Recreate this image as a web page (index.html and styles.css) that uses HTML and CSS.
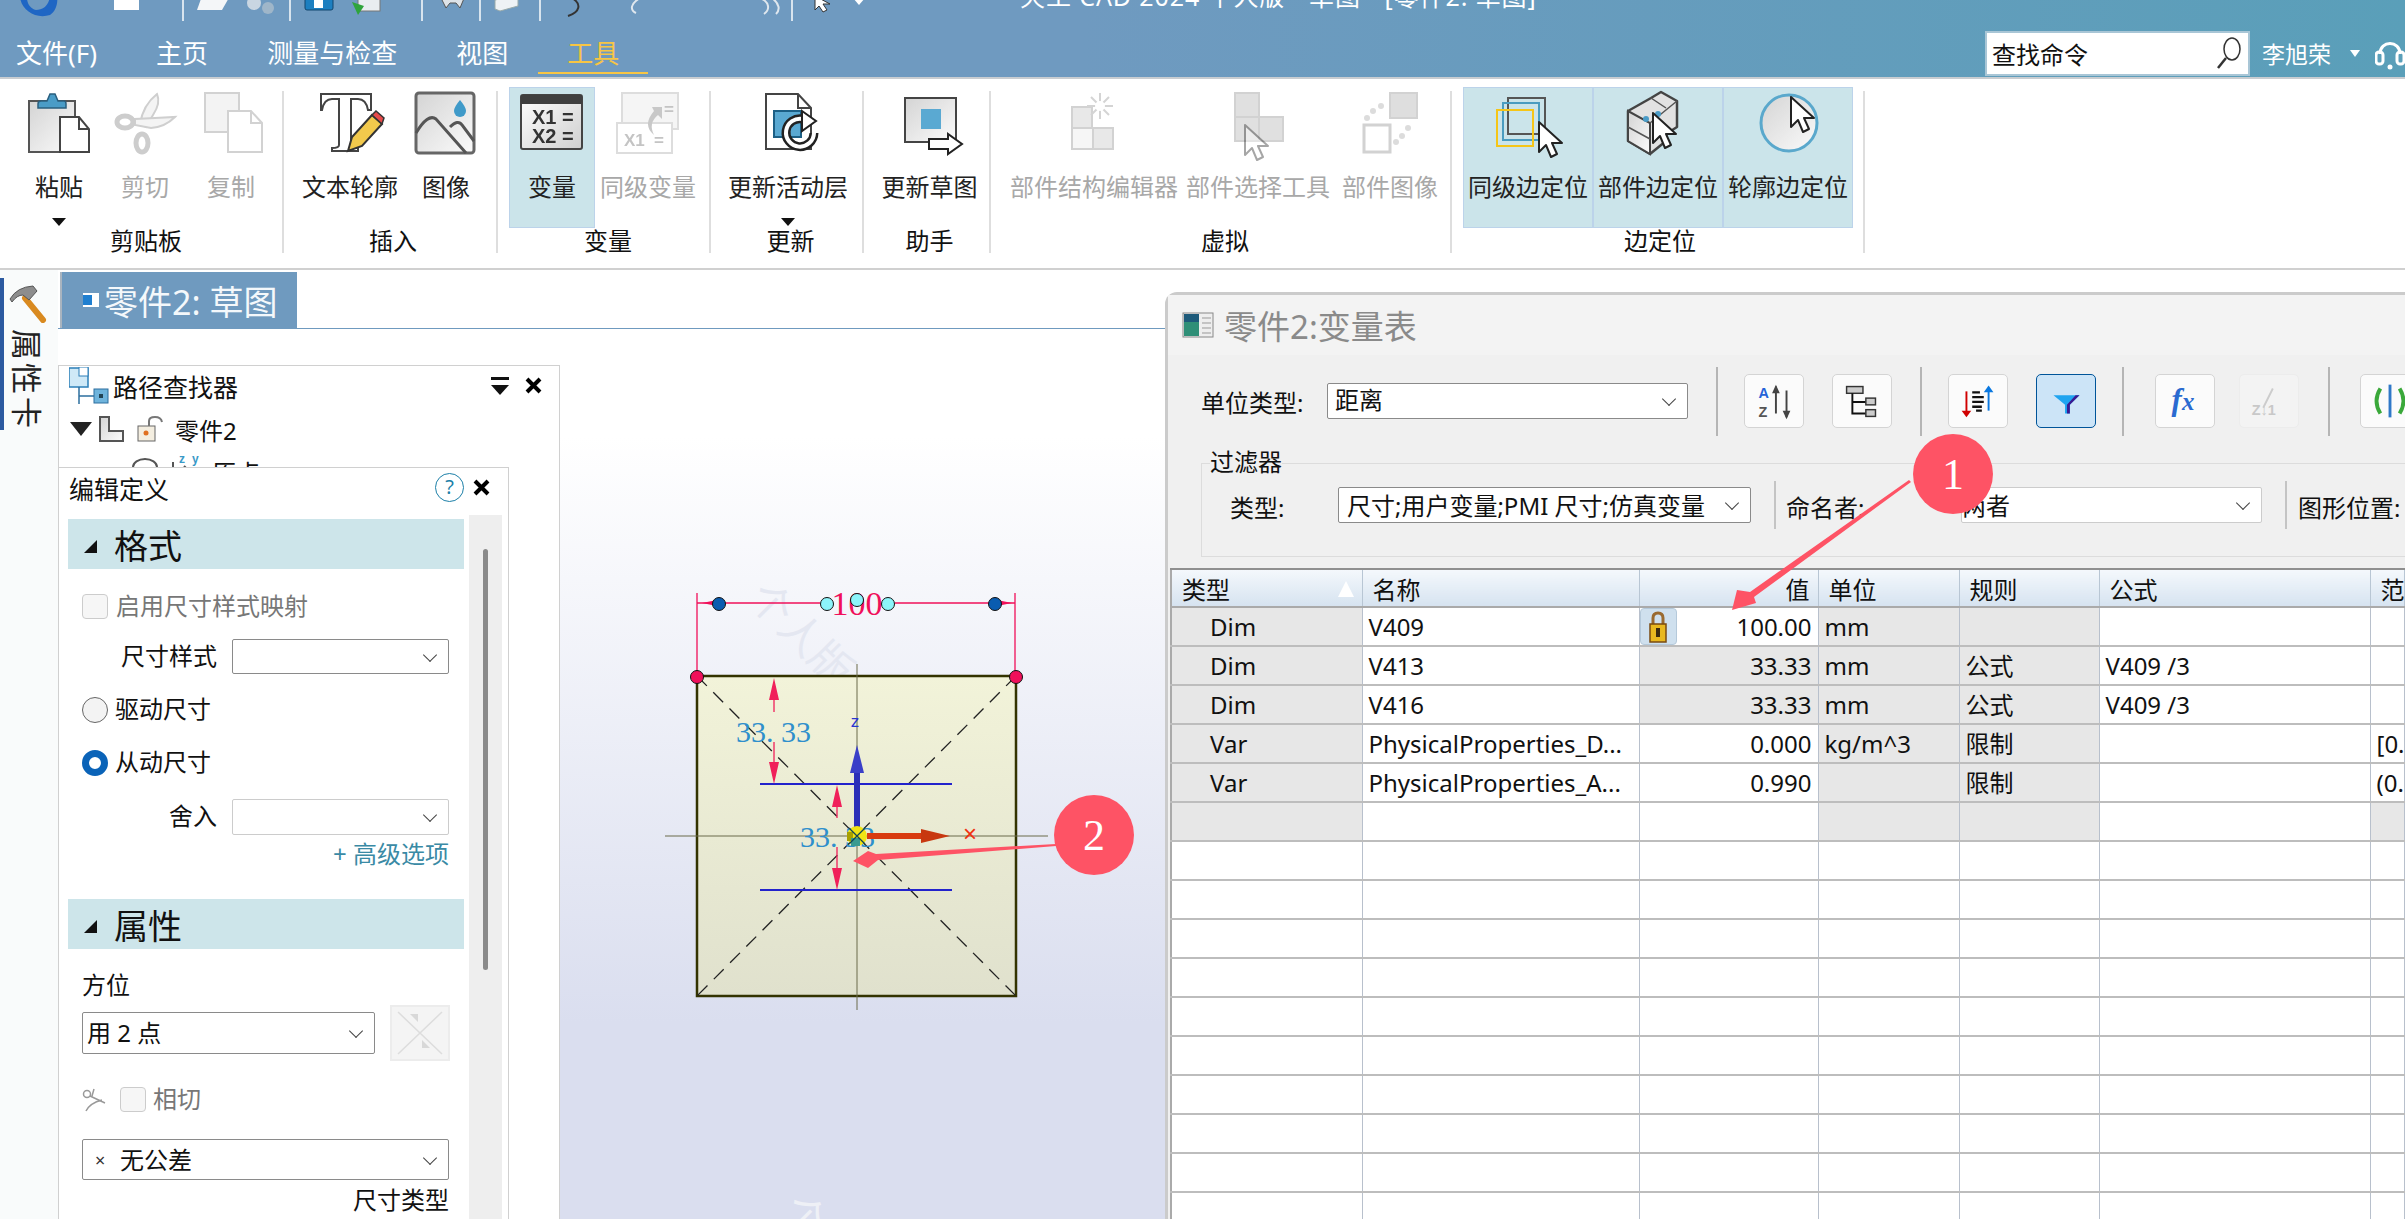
FILE: index.html
```html
<!DOCTYPE html>
<html lang="zh-CN">
<head>
<meta charset="utf-8">
<title>天工 CAD 2024</title>
<link rel="stylesheet" href="styles.css">
</head>
<body>
<svg class="defs" aria-hidden="true"><defs>
  <linearGradient id="g" x1="0" y1="0" x2="1" y2="1"><stop offset="0" stop-color="#d4d4d4"/><stop offset="1" stop-color="#fbfbfb"/></linearGradient>
  <linearGradient id="gd" x1="0" y1="0" x2="1" y2="1"><stop offset="0" stop-color="#fff"/><stop offset="1" stop-color="#cfcfcf"/></linearGradient>
  <linearGradient id="sq" x1="0" y1="0" x2="0" y2="1"><stop offset="0" stop-color="#f2f3d9"/><stop offset="1" stop-color="#e0e1cd"/></linearGradient>
  <path id="cursor" d="M0 0V30L7 23 12 35 18 32 13 21H23Z" fill="#fff" stroke="#222" stroke-width="2" stroke-linejoin="round"/>
</defs></svg>

<div class="app">
  <header class="titlebar">
    <div class="qat">
      <svg class="qat-icons" width="1000" height="21" viewBox="0 0 1000 21">
        <path d="M20-8C18 8 34 20 50 15 57 10 58 2 57-6L50-6C50 4 44 10 36 10 28 8 26 0 27-8Z" fill="#1f66c4"/>
        <rect x="114" y="-6" width="25" height="16" fill="#fff"/>
        <path d="M183 0V21M290 0V21M422 0V21M480 0V21M540 0V21M792 0V21" stroke="#d8e4ee" stroke-width="2"/>
        <path d="M202-4H230L222 10H197Z" fill="#f4f6f8"/>
        <circle cx="254" cy="3" r="7" fill="#c9d6e2"/><circle cx="268" cy="8" r="6" fill="#9fb6c9"/>
        <rect x="305" y="-6" width="28" height="16" rx="2" fill="#1c7fc0" stroke="#12466e"/><rect x="314" y="0" width="9" height="8" fill="#fff"/>
        <rect x="358" y="-6" width="22" height="17" fill="#e9edf0" stroke="#777"/><path d="M352 2L364 6 358 15Z" fill="#2fa43c"/>
        <path d="M440-4H465L460 8 456 3H450L446 8Z" fill="#dde3e8" stroke="#555"/>
        <path d="M495 0L512-4H518V6L500 11 495 9Z" fill="#eef2f5" stroke="#9aa"/>
        <path d="M572-2C582 4 580 12 568 16" fill="none" stroke="#333" stroke-width="2"/>
        <path d="M640-2C630 4 630 10 636 13" fill="none" stroke="#dfe7ee" stroke-width="2"/>
        <path d="M760-2C770 2 770 10 764 14M772-2C780 4 780 10 776 14" fill="none" stroke="#dfe7ee" stroke-width="2"/>
        <path d="M815-4V10L819 6 823 12 827 10 823 4H830Z" fill="#fff" stroke="#333"/>
        <path d="M853-2H865L859 5Z" fill="#fff"/>
      </svg>
      <span class="app-title">天工 CAD 2024 个人版 - 草图 - [零件2: 草图]</span>
    </div>
    <div class="menubar">
      <nav class="tabs">
        <span>文件(F)</span><span>主页</span><span>测量与检查</span><span>视图</span><span class="tab-active">工具</span>
      </nav>
      <div class="search">
        <span>查找命令</span>
        <svg width="28" height="34" viewBox="0 0 28 34"><ellipse cx="17" cy="13" rx="8" ry="11" fill="none" stroke="#333" stroke-width="1.5"/><path d="M11 22L3 32" stroke="#333" stroke-width="2.5"/></svg>
      </div>
      <span class="user">李旭荣</span>
      <span class="user-caret"></span>
      <svg class="headset" width="30" height="34" viewBox="0 0 30 34"><path d="M5 18C5 4 25 4 25 18" fill="none" stroke="#fff" stroke-width="3"/><rect x="1" y="16" width="7" height="12" rx="3" fill="none" stroke="#fff" stroke-width="3"/><rect x="22" y="16" width="7" height="12" rx="3" fill="none" stroke="#fff" stroke-width="3"/><circle cx="15" cy="31" r="2.5" fill="#fff"/></svg>
    </div>
  </header>

  <section class="ribbon">
    <div class="rgroup rg-clip">
      <div class="rbtns">
        <div class="rbtn rb-86"><svg class="ric" viewBox="0 0 64 64"><rect x="2" y="10" width="46" height="51" fill="url(#g)" stroke="#555" stroke-width="2"/><path d="M11 17V13Q11 10 14 10H20L23 3H28L31 10H37Q39 10 39 13V17Z" fill="#4a9cc7" stroke="#2a5f7f" stroke-width="1.5"/><path d="M33 26H52L62 38V61H33Z" fill="#fff" stroke="#444" stroke-width="2"/><path d="M52 26V38H62" fill="none" stroke="#444" stroke-width="2"/></svg><span class="rlabel">粘贴</span><i class="caret"></i></div>
        <div class="rbtn rb-86 off"><svg class="ric" viewBox="0 0 64 64"><g fill="#f4f4f4" stroke="#cfcfcf" stroke-width="2"><path d="M44 3Q48 12 40 24L33 36 27 33Q30 14 44 3Z"/><path d="M62 26Q52 36 38 37L22 34V28L42 27Z"/></g><g fill="none" stroke="#cdcdcd" stroke-width="5"><ellipse cx="12" cy="31" rx="8" ry="6"/><ellipse cx="29" cy="52" rx="6" ry="9"/></g></svg><span class="rlabel">剪切</span></div>
        <div class="rbtn rb-86 off"><svg class="ric" viewBox="0 0 64 64"><rect x="6" y="2" width="34" height="39" fill="#f3f3f3" stroke="#d2d2d2" stroke-width="2"/><path d="M29 20H52L63 32V61H29Z" fill="#fff" stroke="#d2d2d2" stroke-width="2"/><path d="M52 20V32H63" fill="none" stroke="#d2d2d2" stroke-width="2"/></svg><span class="rlabel">复制</span></div>
      </div>
      <div class="rgroup-label rgl-clip">剪贴板</div>
    </div>

    <div class="rgroup rg-insert">
      <div class="rbtns">
        <div class="rbtn rb-106"><svg class="ric" viewBox="0 0 64 64"><path d="M3 3H53V19H50Q48 8 40 8H33V54Q33 57 40 57V60H14V57Q21 57 21 54V8H14Q6 8 4 19H3Z" fill="#fff" stroke="#444" stroke-width="2"/><path d="M30 60L34 46 54 24 64 33 44 55Z" fill="#f2c94c" stroke="#333" stroke-width="2"/><path d="M54 24L58 20 66 27 64 33Z" fill="#e64a4a" stroke="#333" stroke-width="1.5"/></svg><span class="rlabel">文本轮廓</span></div>
        <div class="rbtn rb-86"><svg class="ric" viewBox="0 0 64 64"><rect x="2" y="2" width="58" height="60" rx="3" fill="url(#g)" stroke="#666" stroke-width="3"/><path d="M46 9Q52 16 52 20A6 6 0 0 1 40 20Q40 16 46 9Z" fill="#3f9ac9"/><path d="M2 42Q14 22 22 28L52 62M36 36Q44 28 48 34L60 50" fill="none" stroke="#555" stroke-width="3"/></svg><span class="rlabel">图像</span></div>
      </div>
      <div class="rgroup-label rgl-insert">插入</div>
    </div>

    <div class="rgroup rg-var">
      <div class="rbtns">
        <div class="rbtn rb-86 on"><svg class="ric" viewBox="0 0 64 64"><rect x="1" y="4" width="61" height="54" rx="2" fill="url(#gd)" stroke="#444" stroke-width="2"/><rect x="1" y="4" width="61" height="9" fill="#3f3f3f"/><text class="ric-t" x="12" y="33">X1 =</text><text class="ric-t" x="12" y="52">X2 =</text></svg><span class="rlabel">变量</span></div>
        <div class="rbtn rb-106 off"><svg class="ric" viewBox="0 0 64 64"><rect x="6" y="2" width="56" height="36" fill="#f5f5f5" stroke="#ddd" stroke-width="2"/><rect x="1" y="32" width="55" height="30" fill="#fff" stroke="#ddd" stroke-width="2"/><path d="M36 16H46V28L42 24Q32 32 38 44 26 34 38 20Z" fill="#c8c8c8"/><text class="ric-t ric-off" x="8" y="55">X1</text><text class="ric-t ric-off" x="38" y="55">=</text><text class="ric-t ric-off" x="48" y="24">=</text></svg><span class="rlabel">同级变量</span></div>
      </div>
      <div class="rgroup-label rgl-var">变量</div>
    </div>

    <div class="rgroup rg-update">
      <div class="rbtns">
        <div class="rbtn rb-full"><svg class="ric" viewBox="0 0 64 64"><path d="M10 3H42L55 17V58H10Z" fill="#fff" stroke="#444" stroke-width="2"/><path d="M42 3V17H55" fill="none" stroke="#444" stroke-width="2"/><rect x="18" y="20" width="27" height="26" fill="#5aa9d2" stroke="#1c5f85" stroke-width="2"/><path d="M58 42A14 14 0 1 1 47 28" fill="none" stroke="#222" stroke-width="9"/><path d="M58 42A14 14 0 1 1 47 28" fill="none" stroke="#fff" stroke-width="4"/><path d="M46 20L60 30 46 40Z" fill="#fff" stroke="#222" stroke-width="2"/></svg><span class="rlabel">更新活动层</span><i class="caret"></i></div>
      </div>
      <div class="rgroup-label rgl-update">更新</div>
    </div>

    <div class="rgroup rg-helper">
      <div class="rbtns">
        <div class="rbtn rb-full"><svg class="ric" viewBox="0 0 64 64"><rect x="7" y="7" width="51" height="44" fill="url(#g)" stroke="#444" stroke-width="2"/><rect x="23" y="18" width="20" height="20" fill="#5aa9d2"/><path d="M31 48H50V43L64 53 50 63V58H31Z" fill="#fff" stroke="#222" stroke-width="2"/></svg><span class="rlabel">更新草图</span></div>
      </div>
      <div class="rgroup-label">助手</div>
    </div>

    <div class="rgroup rg-virtual">
      <div class="rbtns">
        <div class="rbtn rb-176 off"><svg class="ric" viewBox="0 0 64 64"><g fill="#e8e8e8" stroke="#d2d2d2" stroke-width="2"><rect x="10" y="16" width="20" height="21"/><rect x="10" y="37" width="21" height="21" fill="#f6f6f6"/><rect x="31" y="37" width="20" height="21"/></g><path d="M38 2V28M25 15H51M29 6L47 24M47 6L29 24" stroke="#d4d4d4" stroke-width="2"/><circle cx="38" cy="15" r="5" fill="#fff"/></svg><span class="rlabel">部件结构编辑器</span></div>
        <div class="rbtn rb-152 off"><svg class="ric" viewBox="0 0 64 64"><g fill="#e0e0e0" stroke="#d2d2d2" stroke-width="2"><rect x="9" y="2" width="24" height="24"/><rect x="9" y="26" width="24" height="24"/><rect x="33" y="26" width="24" height="24"/></g><use href="#cursor" x="19" y="34" opacity=".4"/></svg><span class="rlabel">部件选择工具</span></div>
        <div class="rbtn rb-112 off"><svg class="ric" viewBox="0 0 64 64"><rect x="32" y="2" width="27" height="25" fill="#dedede" stroke="#d2d2d2" stroke-width="2"/><rect x="6" y="34" width="26" height="27" fill="#fff" stroke="#d2d2d2" stroke-width="3"/><g fill="#dcdcdc"><circle cx="9" cy="27" r="3"/><circle cx="15" cy="20" r="3"/><circle cx="23" cy="15" r="3"/><circle cx="38" cy="51" r="3"/><circle cx="44" cy="45" r="3"/><circle cx="50" cy="37" r="3"/></g></svg><span class="rlabel">部件图像</span></div>
      </div>
      <div class="rgroup-label rgl-virtual">虚拟</div>
    </div>

    <div class="rgroup rg-edge">
      <div class="rbtns">
        <div class="rbtn rb-130 on"><svg class="ric" viewBox="0 0 64 64"><rect x="12" y="7" width="37" height="36" fill="none" stroke="#555" stroke-width="2"/><rect x="7" y="12" width="36" height="37" fill="none" stroke="#4a9cc0" stroke-width="2"/><rect x="1" y="19" width="36" height="36" fill="none" stroke="#f5c518" stroke-width="2"/><use href="#cursor" x="43" y="31"/></svg><span class="rlabel">同级边定位</span></div>
        <div class="rbtn rb-130 on"><svg class="ric" viewBox="0 0 64 64"><path d="M2 20L25 7 35 1 51 10V36L40 43V50L24 63 2 50Z" fill="#e2e2e2" stroke="#444" stroke-width="2.5" stroke-linejoin="round"/><path d="M2 20L24 32V63L2 50Z" fill="url(#g)" stroke="#444" stroke-width="2"/><path d="M24 32L51 10M25 7L40 17M2 36L24 48" fill="none" stroke="#555" stroke-width="1.5"/><circle cx="20" cy="28" r="3" fill="#4a9cc7"/><circle cx="32" cy="23" r="3" fill="#4a9cc7"/><use href="#cursor" x="27" y="22"/></svg><span class="rlabel">部件边定位</span></div>
        <div class="rbtn rb-130 on"><svg class="ric" viewBox="0 0 64 64"><circle cx="33" cy="32" r="28" fill="url(#g)" stroke="#5aa8cc" stroke-width="3"/><use href="#cursor" x="35" y="6"/></svg><span class="rlabel">轮廓边定位</span></div>
      </div>
      <div class="rgroup-label rgl-edge">边定位</div>
    </div>
  </section>

  <main class="workspace">
    <aside class="strip">
      <div class="strip-tab">
        <svg width="38" height="38" viewBox="0 0 38 38"><path d="M16 13L34 35" stroke="#d98a20" stroke-width="6" stroke-linecap="round"/><path d="M1 14Q8 2 24 1L28 6 20 15 14 10Q8 10 3 17Z" fill="#8d8d8d" stroke="#555"/></svg>
        <span class="strip-text">属性卡</span>
      </div>
    </aside>
    <div class="doc">
      <div class="doc-tabs">
        <div class="doc-tab">
          <svg width="16" height="14" viewBox="0 0 16 14"><rect width="16" height="14" fill="#fff"/><rect x="0" y="2" width="9" height="10" fill="#1f7fd0"/></svg>
          <span>零件2: 草图</span>
        </div>
      </div>
      <div class="doc-body">
        <div class="side">
          <div class="path-panel">
            <div class="path-head">
              <svg width="40" height="38" viewBox="0 0 40 38"><rect x="0" y="1" width="19" height="19" fill="#cfe9f7" stroke="#2d7fb8" stroke-width="1.5"/><rect x="10" y="0" width="9" height="9" fill="#fff" stroke="#2d7fb8"/><path d="M10 20V37M10 29H25" stroke="#2d6f9f" stroke-width="1.5"/><rect x="25" y="22" width="14" height="14" fill="#6fb4dc" stroke="#2d6f9f"/><rect x="30" y="27" width="4" height="4" fill="#245"/></svg>
              <span class="path-title">路径查找器</span>
              <span class="filter-ico"></span>
              <svg class="x-ico" width="17" height="17" viewBox="0 0 17 17"><path d="M2 2L15 15M15 2L2 15" stroke="#000" stroke-width="4"/></svg>
            </div>
            <div class="tree-row">
              <i class="tree-tri"></i>
              <svg width="26" height="26" viewBox="0 0 26 26"><path d="M1 1H10V15H24V25H1Z" fill="url(#g)" stroke="#555" stroke-width="2"/></svg>
              <svg width="26" height="26" viewBox="0 0 26 26"><rect x="1" y="10" width="17" height="15" fill="#f4eee0" stroke="#666"/><circle cx="9" cy="17" r="2.5" fill="#e07020"/><path d="M12 10V5Q12 1 18 1T25 6" fill="none" stroke="#777" stroke-width="2"/></svg>
              <span class="tree-label">零件2</span>
            </div>
            <div class="tree-row tree-row-2">
              <svg width="26" height="26" viewBox="0 0 26 26"><ellipse cx="13" cy="13" rx="12" ry="8" fill="none" stroke="#555" stroke-width="2"/></svg>
              <svg width="30" height="26" viewBox="0 0 30 26"><path d="M3 8V24M14 12L24 22" stroke="#555" stroke-width="2"/><text class="axis-t" x="9" y="9">z</text><text class="axis-t" x="22" y="9">y</text></svg>
              <span class="tree-label">原点</span>
            </div>

            <div class="edit-panel">
              <div class="edit-head">
                <span>编辑定义</span>
                <span class="help">?</span>
                <svg class="x-ico" width="17" height="17" viewBox="0 0 17 17"><path d="M2 2L15 15M15 2L2 15" stroke="#000" stroke-width="4"/></svg>
              </div>
              <div class="edit-body">
                <div class="edit-content">
                  <div class="section"><i class="sec-tri"></i><span>格式</span></div>
                  <div class="frow r-check muted"><i class="check"></i><span>启用尺寸样式映射</span></div>
                  <div class="frow r-style"><label class="flabel">尺寸样式</label><div class="sel sel-217"></div></div>
                  <div class="frow r-drive"><i class="radio"></i><span>驱动尺寸</span></div>
                  <div class="frow r-driven"><i class="radio radio-on"></i><span>从动尺寸</span></div>
                  <div class="frow r-round"><label class="flabel">舍入</label><div class="sel sel-217 sel-light"></div></div>
                  <div class="link-row">+ 高级选项</div>
                  <div class="section sec-2"><i class="sec-tri"></i><span>属性</span></div>
                  <div class="frow r-orient"><span>方位</span></div>
                  <div class="frow r-orsel">
                    <div class="sel sel-293"><span>用 2 点</span></div>
                    <div class="orient-btn"><svg width="52" height="50" viewBox="0 0 52 50"><path d="M4 4L48 46M48 4L4 46" stroke="#ddd" stroke-width="1.5"/><path d="M16 6H24V14ZM36 40H28V32Z" fill="#d8d8d8"/></svg></div>
                  </div>
                  <div class="frow r-tan muted">
                    <svg width="24" height="24" viewBox="0 0 24 24"><circle cx="5" cy="6" r="3.5" fill="none" stroke="#999" stroke-width="1.5"/><path d="M8 8L23 15M12 1L10 8M4 23Q8 15 20 12" fill="none" stroke="#999" stroke-width="1.5"/></svg>
                    <i class="check"></i><span>相切</span>
                  </div>
                  <div class="frow r-tol"><div class="sel sel-full"><span class="tol-x">×</span><span>无公差</span></div></div>
                  <div class="link-row dim-type">尺寸类型</div>
                </div>
                <div class="vscroll"><i></i></div>
              </div>
            </div>
          </div>
        </div>

        <div class="viewport">
          <svg width="605" height="890" viewBox="560 329 605 890">
            <text class="wm" transform="translate(746 600) rotate(45)">个人版</text>
            <text class="wm wm-2" transform="translate(780 1212) rotate(45)">个</text>
            <rect x="697" y="676" width="319" height="320" fill="url(#sq)" stroke="#333300" stroke-width="2.5"/>
            <path d="M665 836H1048M857 664V1010" stroke="#6b6b4a" stroke-width="1"/>
            <path d="M697 676L1016 996M1016 676L697 996" stroke="#222" stroke-width="1.3" stroke-dasharray="14 9"/>
            <path d="M697 593V676M1015 593V676M697 603H820M895 603H1015" stroke="#f0105a" stroke-width="1.3"/>
            <path d="M702 603L722 599V607ZM1012 603L992 599V607Z" fill="#f0105a"/>
            <text class="dim-red" x="857" y="615">100</text>
            <g stroke="#111" stroke-width="1"><circle cx="719" cy="604" r="6.5" fill="#0a5cb0"/><circle cx="995" cy="604" r="6.5" fill="#0a5cb0"/><circle cx="827" cy="604" r="6.5" fill="#8cf4fa"/><circle cx="857" cy="600" r="6.5" fill="#8cf4fa"/><circle cx="888" cy="604" r="6.5" fill="#8cf4fa"/><circle cx="697" cy="677" r="6.5" fill="#f0105a"/><circle cx="1016" cy="677" r="6.5" fill="#f0105a"/></g>
            <path d="M760 784H952M760 890H952" stroke="#2222cc" stroke-width="2"/>
            <path d="M774 700V712M774 742V762M837 807V818M837 847V868" stroke="#f0205a" stroke-width="1.3"/>
            <path d="M774 678L769 700H779ZM774 784L769 762H779ZM837 785L832 807H842ZM837 890L832 868H842Z" fill="#f0205a"/>
            <text class="dim-blue" x="736" y="742">33. 33</text>
            <text class="dim-blue" x="800" y="847">33. 33</text>
            <rect x="854" y="773" width="6" height="63" fill="#2b2fb8"/>
            <path d="M857 745L850 773H864Z" fill="#3a3fc8"/>
            <text class="axis-z" x="855" y="727">z</text>
            <rect x="867" y="833" width="58" height="6" fill="#d83a10"/>
            <path d="M950 836L921 829V843Z" fill="#c83810"/>
            <text class="axis-x" x="970" y="842">×</text>
            <circle cx="857" cy="836" r="10" fill="#f0e414"/>
            <rect x="847" y="832" width="6" height="9" fill="#a8a000"/>
            <rect x="851" y="838" width="9" height="8" fill="#3a9a90"/>
            <path d="M849 828L865 844M865 828L849 844" stroke="#145" stroke-width="1.3"/>
          </svg>
        </div>
      </div>
    </div>
  </main>

  <section class="vartable">
    <div class="vt-title">
      <svg width="32" height="26" viewBox="0 0 32 26"><rect x="1" y="1" width="30" height="24" fill="#eee" stroke="#888"/><rect x="2" y="2" width="15" height="22" fill="#2f8f77"/><rect x="2" y="2" width="15" height="8" fill="#1d5a7a"/><path d="M20 6H29M20 11H29M20 16H29M20 21H29" stroke="#999"/></svg>
      <span>零件2:变量表</span>
    </div>
    <div class="vt-toolbar">
      <span class="vt-label">单位类型:</span>
      <div class="sel sel-361"><span>距离</span></div>
      <i class="vsep"></i>
      <div class="tbtns">
        <div class="tbtn"><svg viewBox="0 0 60 54"><text class="az az-a" x="14" y="24">A</text><text class="az az-z" x="14" y="44">Z</text><path d="M32 12V40M43 16V44" stroke="#444" stroke-width="2"/><path d="M32 10L28 19H36ZM43 46L39 37H47Z" fill="#444"/></svg></div>
        <div class="tbtn"><svg viewBox="0 0 60 54"><rect x="14" y="12" width="17" height="7" fill="#ccc" stroke="#333" stroke-width="1.5"/><path d="M20 19V40H34M20 28H34" fill="none" stroke="#111" stroke-width="2"/><rect x="34" y="24" width="10" height="7" fill="#ccc" stroke="#333" stroke-width="1.5"/><rect x="34" y="36" width="10" height="7" fill="#ccc" stroke="#333" stroke-width="1.5"/></svg></div>
      </div>
      <i class="vsep"></i>
      <div class="tbtns">
        <div class="tbtn"><svg viewBox="0 0 60 54"><path d="M18 17V40" stroke="#d00000" stroke-width="2"/><path d="M18 44L13 37H23Z" fill="#d00000"/><path d="M24 18H32M24 23H36M24 28H36M24 33H34M28 37H34" stroke="#111" stroke-width="2.4"/><path d="M41 14V37" stroke="#0a78e0" stroke-width="2"/><path d="M41 11L36 18H46Z" fill="#0a78e0"/></svg></div>
        <div class="tbtn tbtn-on"><svg viewBox="0 0 60 54"><path d="M17 21H44L34 31V40H29V31Z" fill="#1fa4f0"/><path d="M34 31L44 21H40L31 31V40H34Z" fill="#3a1890"/></svg></div>
      </div>
      <i class="vsep vsep-b"></i>
      <div class="tbtns tbtns-fx">
        <div class="tbtn"><svg viewBox="0 0 60 54"><text class="fx" x="16" y="36">f</text><text class="fx fx-x" x="27" y="36">x</text></svg></div>
        <div class="tbtn tbtn-off"><svg viewBox="0 0 60 54"><text class="num21" x="12" y="42">Z↓1</text><path d="M24 34L34 14" stroke="#ccc" stroke-width="2"/></svg></div>
      </div>
      <i class="vsep vsep-c"></i>
      <div class="tbtn tbtn-last"><svg viewBox="0 0 60 54"><path d="M20 14Q12 27 20 40" fill="none" stroke="#3aa83a" stroke-width="4"/><path d="M40 14Q48 27 40 40" fill="none" stroke="#3aa83a" stroke-width="4"/><path d="M30 10V44" stroke="#2f78c8" stroke-width="3"/></svg></div>
    </div>

    <fieldset class="filter">
      <legend>过滤器</legend>
      <div class="filter-row">
        <span class="fl-type">类型:</span>
        <div class="sel sel-413"><span>尺寸;用户变量;PMI 尺寸;仿真变量</span></div>
        <i class="fsep"></i>
        <span class="fl-name">命名者:</span>
        <div class="sel sel-301 sel-light"><span>两者</span></div>
        <i class="fsep"></i>
        <span class="fl-geo">图形位置:</span>
      </div>
    </fieldset>

    <table class="grid">
      <colgroup><col class="c1"><col class="c2"><col class="c3"><col class="c4"><col class="c5"><col class="c6"><col class="c7"></colgroup>
      <thead><tr>
        <th class="th-type">类型<i class="sort-tri"></i></th><th>名称</th><th class="r">值</th><th>单位</th><th>规则</th><th>公式</th><th>范围</th>
      </tr></thead>
      <tbody>
        <tr><td class="g t">Dim</td><td>V409</td><td class="r lockcell"><span class="lock"><svg width="20" height="32" viewBox="0 0 20 32"><path d="M5 14V7Q5 2 10 2T15 7V14" fill="none" stroke="#9a6a30" stroke-width="3"/><rect x="2" y="13" width="16" height="18" fill="#e8b820" stroke="#7a4a10" stroke-width="1.5"/><rect x="8" y="17" width="4" height="9" fill="#3a2a10"/></svg></span>100.00</td><td class="g">mm</td><td class="g"></td><td></td><td></td></tr>
        <tr><td class="g t">Dim</td><td>V413</td><td class="g r">33.33</td><td class="g">mm</td><td class="g">公式</td><td>V409 /3</td><td></td></tr>
        <tr><td class="g t">Dim</td><td>V416</td><td class="g r">33.33</td><td class="g">mm</td><td class="g">公式</td><td>V409 /3</td><td></td></tr>
        <tr><td class="g t">Var</td><td>PhysicalProperties_D...</td><td class="r">0.000</td><td class="g">kg/m^3</td><td class="g">限制</td><td></td><td>[0.000, ∞)</td></tr>
        <tr><td class="g t">Var</td><td>PhysicalProperties_A...</td><td class="r">0.990</td><td class="g"></td><td class="g">限制</td><td></td><td>(0.000, 1)</td></tr>
        <tr><td class="g"></td><td></td><td></td><td class="g"></td><td class="g"></td><td></td><td class="g"></td></tr>
        <tr><td></td><td></td><td></td><td></td><td></td><td></td><td></td></tr>
        <tr><td></td><td></td><td></td><td></td><td></td><td></td><td></td></tr>
        <tr><td></td><td></td><td></td><td></td><td></td><td></td><td></td></tr>
        <tr><td></td><td></td><td></td><td></td><td></td><td></td><td></td></tr>
        <tr><td></td><td></td><td></td><td></td><td></td><td></td><td></td></tr>
        <tr><td></td><td></td><td></td><td></td><td></td><td></td><td></td></tr>
        <tr><td></td><td></td><td></td><td></td><td></td><td></td><td></td></tr>
        <tr><td></td><td></td><td></td><td></td><td></td><td></td><td></td></tr>
        <tr><td></td><td></td><td></td><td></td><td></td><td></td><td></td></tr>
        <tr><td></td><td></td><td></td><td></td><td></td><td></td><td></td></tr>
      </tbody>
    </table>
  </section>

  <svg class="annot" viewBox="0 0 2405 1219" width="2405" height="1219">
    <path class="an" d="M1909 480L1750 592 1737 590 1732 610 1756 603 1754 597 1911 482Z"/>
    <circle class="an" cx="1953" cy="474" r="40"/>
    <text class="an-n" x="1953" y="489">1</text>
    <path class="an" d="M1056 844L876 854 868 851 853 861 868 868 878 860 1056 846Z"/>
    <circle class="an" cx="1094" cy="835" r="40"/>
    <text class="an-n" x="1094" y="850">2</text>
  </svg>
</div>
</body>
</html>
```

FILE: styles.css
```css
* { box-sizing: border-box; }
html, body { margin: 0; padding: 0; }
body {
  width: 2405px; height: 1219px; overflow: hidden; background: #fff;
  font-family: "Noto Sans", "Noto Sans CJK SC", sans-serif;
  font-size: 24px; color: #111;
}
i { display: block; font-style: normal; }
.defs { position: absolute; width: 0; height: 0; }
.app { position: relative; width: 2405px; height: 1219px; overflow: hidden; display: flex; flex-direction: column; }

/* title bar */
.titlebar { height: 77px; flex: none; color: #fff; background: linear-gradient(90deg, #6f9ac0 0, #6f9ac0 45%, #5a9fb9 100%); }
.qat { height: 21px; display: flex; overflow: hidden; }
.qat-icons { flex: none; display: block; margin-right: 20px; }
.app-title { font-size: 25px; line-height: 25px; margin-top: -16px; white-space: nowrap; letter-spacing: .9px; }
.menubar { height: 56px; display: flex; align-items: center; padding: 8px 0 0 16px; }
.tabs { display: flex; gap: 59px; font-size: 26px; line-height: 30px; }
.tab-active { color: #f7c544; position: relative; }
.tab-active::after { content: ""; position: absolute; left: -29px; right: -29px; top: 34px; height: 2px; background: #f7c544; }
.search { margin-left: auto; width: 265px; height: 45px; background: #fff; border: 2px solid #a9c6d6; color: #111; display: flex; align-items: center; justify-content: space-between; padding: 0 5px; }
.user { margin-left: 12px; width: 72px; font-size: 23px; white-space: nowrap; }
.user-caret { margin-left: 16px; border: 5px solid transparent; border-top: 7px solid #fff; border-bottom: 0; }
.headset { flex: none; margin-left: 15px; margin-right: 0; }

/* ribbon */
.ribbon { height: 193px; flex: none; display: flex; border-top: 2px solid #c9cdd1; border-bottom: 2px solid #d0d0d0; padding-top: 12px; background: #fff; }
.rgroup { height: 162px; flex: none; border-right: 2px solid #dedede; display: flex; flex-direction: column; }
.rg-clip { width: 284px; padding-left: 16px; }
.rg-insert { width: 214px; padding-left: 13px; }
.rg-var { width: 213px; padding-left: 11px; }
.rg-update { width: 153px; padding-left: 3px; }
.rg-helper { width: 127px; padding-left: 6px; }
.rg-virtual { width: 461px; padding-left: 15px; }
.rg-edge { width: 413px; padding-left: 11px; }
.rbtns { display: flex; height: 141px; margin-top: -4px; }
.rbtn { position: relative; height: 141px; padding-top: 4px; display: flex; flex-direction: column; align-items: center; flex: none; }
.ric { width: 64px; height: 64px; flex: none; display: block; overflow: visible; filter: blur(.35px); }
.rlabel { display: block; margin-top: 20px; line-height: 24px; white-space: nowrap; color: #222; }
.off .rlabel { color: #a8a8a8; }
.rb-86 { width: 86px; } .rb-106 { width: 106px; } .rb-112 { width: 112px; } .rb-130 { width: 130px; } .rb-152 { width: 152px; } .rb-176 { width: 176px; } .rb-full { width: 100%; }
.on { background: #cbe4ea; border: 1px solid #bcd3ea; }
.on .ric { margin-top: -1px; }
.caret { margin-top: 19px; border: 7px solid transparent; border-top: 8px solid #111; border-bottom: 0; }
.rgroup-label { height: 25px; line-height: 25px; text-align: center; color: #111; }
.rgl-clip { margin-left: -6px; }
.rgl-insert { padding-right: 7px; }
.rgl-var { padding-right: 2px; }
.rgl-update { padding-left: 5px; }
.rgl-virtual { padding-right: 6px; }
.rgl-edge { padding-right: 6px; }
.ric-t { font-family: "Liberation Sans", sans-serif; font-weight: 700; font-size: 20px; fill: #333; }
.ric-off { fill: #c4c4c4; font-size: 17px; }

/* workspace */
.workspace { flex: 1; min-height: 0; display: flex; }
.strip { width: 58px; flex: none; background: #f9fbfb; }
.strip-tab { margin-top: 8px; height: 152px; border-left: 4px solid #2c5aa0; padding: 7px 0 0 5px; }
.strip-tab svg { display: block; }
.strip-text { display: block; margin-top: 6px; writing-mode: vertical-rl; text-orientation: sideways; font-size: 31px; line-height: 36px; color: #222; letter-spacing: 3px; }
.doc { flex: 1; min-width: 0; display: flex; flex-direction: column; }
.doc-tabs { height: 59px; flex: none; padding: 2px 0 0 2px; border-bottom: 1px solid #6f9abf; }
.doc-tab { width: 237px; height: 56px; background: #6f9abf; border-left: 2px solid #a9b4bf; color: #f4f8fb; display: flex; align-items: center; gap: 5px; padding-left: 21px; font-size: 34px; white-space: nowrap; }
.doc-tab svg { flex: none; }
.doc-body { flex: 1; min-height: 0; display: flex; }
.side { width: 502px; flex: none; padding-top: 36px; background: #fff; }
.path-panel { position: relative; height: 100%; border: 1px solid #d0d0d0; border-bottom: 0; overflow: hidden; }
.path-head { height: 43px; display: flex; align-items: center; padding: 0 0 4px 10px; }
.path-head svg { flex: none; }
.path-title { margin-left: 4px; font-size: 25px; }
.filter-ico { margin-left: auto; width: 18px; height: 18px; border-top: 3px solid #111; background: linear-gradient(#fff 3px, transparent 3px); position: relative; }
.filter-ico::after { content: ""; position: absolute; left: 0; top: 5px; border: 9px solid transparent; border-top: 10px solid #111; border-bottom: 0; }
.path-head .x-ico { margin: 0 17px 0 16px; }
.tree-row { height: 45px; display: flex; align-items: center; padding: 0 0 5px 11px; gap: 8px; }
.tree-tri { border: 11px solid transparent; border-top: 14px solid #222; border-bottom: 0; margin-right: -1px; }
.tree-row svg { flex: none; }
.tree-row svg:nth-of-type(2) { margin-left: 4px; }
.tree-label { margin-left: 4px; }
.tree-row-2 { padding-left: 73px; padding-bottom: 0; align-items: flex-start; }
.axis-t { font-size: 12px; font-weight: 700; fill: #3a9ac8; font-family: "Liberation Sans", sans-serif; }

/* edit panel */
.edit-panel { position: absolute; left: -1px; top: 101px; bottom: 0; width: 451px; background: #fff; border: 1px solid #d0d0d0; border-bottom: 0; }
.edit-head { height: 47px; display: flex; align-items: center; padding: 0 0 8px 10px; font-size: 25px; }
.help { margin-left: auto; width: 29px; height: 29px; border: 1.5px solid #1c7fa8; border-radius: 50%; font-size: 20px; line-height: 26px; text-align: center; color: #1c7fa8; }
.edit-head .x-ico { flex: none; margin: 0 18px 0 9px; }
.edit-body { display: flex; height: calc(100% - 47px); }
.edit-content { width: 396px; margin-left: 9px; padding-top: 4px; flex: none; }
.vscroll { width: 33px; margin-left: 5px; background: #eee; padding: 34px 0 0 14px; flex: none; }
.vscroll i { width: 5px; height: 421px; background: #8a8a8a; border-radius: 3px; }
.section { height: 50px; background: #cde5ea; display: flex; align-items: center; padding-left: 16px; font-size: 34px; }
.sec-2 { margin-top: 30px; }
.sec-tri { width: 0; height: 0; margin: 4px 17px 0 0; border-left: 13px solid transparent; border-bottom: 13px solid #111; }
.frow { display: flex; align-items: center; padding-left: 14px; line-height: 26px; white-space: nowrap; }
.frow > span, .flabel { padding-bottom: 2px; }
.muted { color: #777; }
.check { width: 26px; height: 25px; border: 1.5px solid #ccc; border-radius: 4px; background: #f6f6f6; flex: none; margin-right: 8px; }
.radio { width: 26px; height: 26px; border: 1.5px solid #666; border-radius: 50%; background: #f3f3f3; flex: none; margin-right: 7px; }
.radio-on { border: 7px solid #0a63b8; background: #fff; }
.flabel { width: 135px; text-align: right; flex: none; margin-right: 15px; }
.r-check { margin-top: 25px; height: 25px; }
.r-style { margin-top: 20px; height: 35px; }
.r-drive { margin-top: 23px; height: 25px; }
.r-driven { margin-top: 28px; height: 26px; }
.r-round { margin-top: 23px; height: 36px; }
.link-row { padding-right: 15px; text-align: right; height: 30px; line-height: 30px; margin-top: 4px; color: #3a8aa5; }
.r-orient { margin-top: 22px; height: 30px; }
.r-orsel { margin-top: 11px; height: 42px; }
.orient-btn { flex: none; width: 60px; height: 56px; margin: -7px 0 -7px 15px; background: #f4f4f4; border: 2px solid #ececec; display: flex; align-items: center; justify-content: center; }
.r-tan { margin-top: 33px; height: 25px; }
.r-tan svg { flex: none; margin-right: 14px; }
.r-tan .check { margin-right: 7px; }
.r-tol { margin-top: 27px; height: 41px; }
.dim-type { margin-top: 5px; color: #111; }

.sel { position: relative; height: 100%; background: #fff; border: 1.5px solid #8a8a8a; border-radius: 2px; display: flex; align-items: center; padding-left: 4px; white-space: nowrap; flex: none; }
.sel::after { content: ""; position: absolute; right: 13px; top: 50%; width: 9px; height: 9px; margin-top: -7px; border-right: 1.5px solid #444; border-bottom: 1.5px solid #444; transform: rotate(45deg); }
.sel-light { border-color: #ccc; }
.sel-217 { width: 217px; } .sel-293 { width: 293px; } .sel-361 { width: 361px; height: 36px; padding: 0 0 6px 7px; } .sel-413 { width: 413px; height: 36px; padding-left: 8px; } .sel-301 { width: 301px; height: 36px; padding-left: 0; }
.sel-full { width: 367px; }
.tol-x { width: 33px; padding-left: 8px; font-size: 18px; color: #333; }

/* viewport */
.viewport { flex: 1; min-width: 0; overflow: hidden; background: linear-gradient(#fff 0, #fff 12%, #dadeef 78%, #dadeef 100%); }
.viewport svg { display: block; }
.wm { font-size: 42px; fill: #e4e7f1; font-family: "Noto Sans CJK SC", sans-serif; }
.wm-2 { fill: #eef0f6; }
.dim-red { font-family: "Liberation Serif", serif; font-size: 34px; fill: #f0105a; text-anchor: middle; }
.dim-blue { font-family: "Liberation Serif", serif; font-size: 30px; fill: #2f8fcc; }
.axis-z { font-size: 17px; fill: #2a35d0; text-anchor: middle; font-family: "Liberation Sans", sans-serif; }
.axis-x { font-size: 24px; fill: #f03010; text-anchor: middle; font-family: "Liberation Sans", sans-serif; }

/* variable window */
.vartable { position: absolute; left: 1165px; top: 292px; width: 1300px; bottom: 0; background: #f0f0f0; border: 3px solid #cbcbcb; border-right: 0; border-bottom: 0; border-top-left-radius: 12px; }
.vt-title { height: 60px; display: flex; align-items: center; gap: 10px; padding-left: 14px; color: #8a8a8a; font-size: 33px; background: #f3f3f3; white-space: nowrap; }
.vt-title svg { flex: none; }
.vt-toolbar { height: 92px; display: flex; align-items: center; padding-left: 33px; }
.vt-label { width: 126px; flex: none; color: #111; white-space: nowrap; }
.vsep { width: 2px; height: 69px; background: #b5b5b5; border: 0; margin: 0 26px 0 28px; flex: none; }
.vsep-b { margin: 0 31px 0 26px; }
.vsep-c { margin: 0 30px 0 29px; }
.tbtns { display: flex; gap: 28px; flex: none; }
.tbtns-fx { gap: 24px; }
.tbtn { width: 60px; height: 54px; flex: none; background: #fbfbfb; border: 1.5px solid #d4d4d4; border-radius: 5px; }
.tbtn svg { display: block; width: 100%; height: 100%; }
.tbtn-on { background: #cce4f7; border-color: #005499; }
.tbtn-off { background: #f3f3f3; border-color: #ececec; }
.az { font-family: "Liberation Sans", sans-serif; font-weight: 700; font-size: 15px; }
.az-a { fill: #2563d8; } .az-z { fill: #555; }
.fx { font-family: "Liberation Serif", serif; font-style: italic; font-size: 32px; fill: #2a6ad0; font-weight: 700; }
.fx-x { font-size: 26px; }
.num21 { font-family: "Liberation Sans", sans-serif; font-size: 15px; fill: #c8c8c8; font-weight: 700; }

.filter { margin: 0 0 0 33px; padding: 0; width: 1300px; height: 110px; border: 1.5px solid #dcdcdc; min-inline-size: 0; }
.filter legend { padding: 0; margin-left: 8px; line-height: 30px; height: 32px; font-size: 24px; }
.filter-row { display: flex; align-items: center; height: 56px; padding: 0 0 5px 28px; white-space: nowrap; }
.fl-type, .fl-name, .fl-geo { padding-top: 3px; }
.fl-type { width: 108px; flex: none; }
.fsep { width: 2px; height: 48px; background: #c4c4c4; margin-left: 23px; flex: none; }
.fl-name { width: 175px; margin-left: 10px; flex: none; }
.fl-geo { margin-left: 11px; flex: none; }

.grid { margin: 11px 0 0 2px; border-collapse: collapse; table-layout: fixed; width: 1233px; background: #fff; border-top: 2px solid #8f8f8f; border-left: 2px solid #aaa; }
.c1 { width: 191px; } .c2 { width: 277px; } .c3 { width: 179px; } .c4 { width: 141px; } .c5 { width: 140px; } .c6 { width: 271px; } .c7 { width: 34px; }
.grid th { height: 38px; padding: 0 0 0 10px; text-align: left; font-weight: 400; background: linear-gradient(#f4f8fc, #d6e3f0); border-right: 1px solid #b8c6d4; border-bottom: 2px solid #aaa; overflow: hidden; white-space: nowrap; position: relative; }
.grid th.r { text-align: right; padding: 0 8px 0 0; }
.sort-tri { position: absolute; right: 8px; top: 11px; width: 0; height: 0; border: 8px solid transparent; border-bottom: 16px solid #fff; border-top: 0; }
.grid td { height: 39px; padding: 0 6px; border-right: 1px solid #b8c0cc; border-bottom: 2px solid #bdbdbd; white-space: nowrap; overflow: hidden; line-height: 30px; }
.grid td.g { background: #e7e7e7; }
.grid td.t { padding-left: 38px; }
.grid td.r { text-align: right; }
.lockcell { position: relative; }
.lock { position: absolute; left: 0; top: 0; bottom: 0; width: 37px; background: #cfe0ee; border: 1px solid #b5c9da; border-radius: 4px; display: flex; align-items: center; justify-content: center; }

/* annotations */
.annot { position: absolute; left: 0; top: 0; display: block; pointer-events: none; }
.an { fill: #fe5365; }
.an-n { font-family: "Liberation Serif", serif; font-size: 44px; fill: #fff; text-anchor: middle; }
```
